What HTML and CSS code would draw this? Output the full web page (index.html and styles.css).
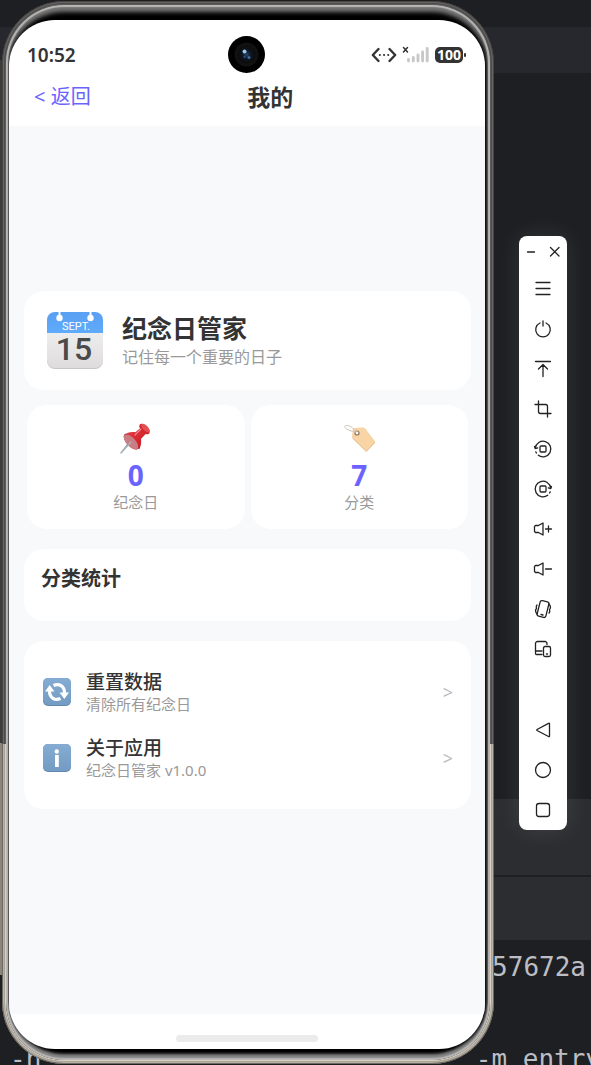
FILE: index.html
```
<!DOCTYPE html>
<html lang="zh-CN">

<head>
    <meta charset="UTF-8">
    <meta name="viewport" content="width=device-width, initial-scale=1">
    <title>我的</title>
    <link rel="stylesheet" href="styles.css">
</head>

<body>
    <div class="ide">
        <div class="ide-editor-top"></div>
        <div class="ide-tabs"></div>
        <div class="ide-editor"></div>
        <div class="ide-panel"></div>
        <div class="ide-panel-tabs"></div>
        <div class="ide-console">
            <div class="console-line"><span>57672a</span></div>
            <div class="console-line"></div>
            <div class="console-line console-command"><span>-h</span><span>-m entry</span></div>
        </div>
        <div class="side-rail"></div>
    </div>

    <div class="desktop">
        <div class="phone">
            <div class="bezel">
                <div class="screen">
                    <div class="status-bar">
                        <span class="time">10:52</span>
                        <svg class="camera" viewBox="0 0 37 37">
                            <defs>
                                <radialGradient id="lens">
                                    <stop offset="0" stop-color="#27466b" />
                                    <stop offset="0.5" stop-color="#10151f" />
                                    <stop offset="1" stop-color="#0b0b0b" />
                                </radialGradient>
                            </defs>
                            <circle cx="18.5" cy="18.5" r="18.5" fill="#000" />
                            <circle cx="18.5" cy="18.5" r="12" fill="#111" />
                            <circle cx="18.5" cy="18.5" r="9" fill="url(#lens)" />
                            <circle cx="16.5" cy="15.5" r="2" fill="#8fc6f2" />
                            <circle cx="21" cy="21.5" r="1.5" fill="#3c6ca6" />
                            <circle cx="16.5" cy="21" r="1" fill="#2e5587" />
                        </svg>
                        <div class="status-icons">
                            <svg width="26" height="18" viewBox="0 0 26 18" fill="none" stroke="#333" stroke-width="2.4" stroke-linecap="round" stroke-linejoin="round">
                                <path d="M7.5 3 1.8 9l5.7 6M18.500 3l5.700 6-5.700 6" />
                                <path d="M8.800 9h.1M13 9h.1M17.200 9h.1" stroke-width="2" />
                            </svg>
                            <svg width="28" height="18" viewBox="0 0 28 18" stroke-linecap="round">
                                <path d="M1.500 1.500l4 4.500M5.500 1.500l-4 4.500" stroke="#333" stroke-width="1.500" />
                                <path d="M6.500 15v-1.500M11.300 15v-3.500M16 15V9M20.600 15V6M25.200 15V2.500" stroke="#c8c8c8" stroke-width="2.900" />
                            </svg>
                            <span class="battery">100</span>
                        </div>
                    </div>

                    <div class="nav-bar">
                        <button class="back-button">&lt; 返回</button>
                        <h1 class="nav-title">我的</h1>
                    </div>

                    <main class="content">
                        <section class="card profile">
                            <svg class="profile-icon" viewBox="0 0 56 57">
                                <defs>
                                    <linearGradient id="paper" x2="0" y2="1">
                                        <stop offset="0" stop-color="#f8f8f8" />
                                        <stop offset="1" stop-color="#dedcdd" />
                                    </linearGradient>
                                    <linearGradient id="sky" x2="0" y2="1">
                                        <stop offset="0" stop-color="#5a9ff2" />
                                        <stop offset="1" stop-color="#5fabfc" />
                                    </linearGradient>
                                </defs>
                                <rect y="1" width="56" height="56" rx="8" fill="#cac6c6" />
                                <rect width="56" height="56" rx="8" fill="url(#paper)" />
                                <path d="M0 21V8a8 8 0 0 1 8-8h40a8 8 0 0 1 8 8v13z" fill="url(#sky)" />
                                <path d="M12.500 0v5M43.500 0v5" stroke="#fff" stroke-width="2" />
                                <circle cx="12.500" cy="6" r="3.200" fill="#fff" />
                                <circle cx="43.500" cy="6" r="3.200" fill="#fff" />
                                <text class="calendar-month" x="29" y="18">SEPT.</text>
                                <text class="calendar-day" x="27" y="48">15</text>
                            </svg>
                            <div>
                                <h2 class="profile-name">纪念日管家</h2>
                                <p class="profile-slogan">记住每一个重要的日子</p>
                            </div>
                        </section>

                        <section class="stats">
                            <div class="card stat">
                                <svg class="stat-icon" viewBox="0 0 31 31">
                                    <defs>
                                        <linearGradient id="pin" x2="1" y2="1">
                                            <stop offset="0" stop-color="#e5404b" />
                                            <stop offset="0.6" stop-color="#d5262f" />
                                            <stop offset="1" stop-color="#a91c28" />
                                        </linearGradient>
                                    </defs>
                                    <path d="M10.500 20 2 29.500l-1.500 1L1 29l8-10.500z" fill="#8b98a2" />
                                    <ellipse cx="11.500" cy="18.500" rx="5" ry="10" transform="rotate(-44 11.500 18.500)" fill="#b61d2a" />
                                    <path d="M7 10c3-1 6-1.200 8.500-.8l6-5.200 5.500 5.500-6 6.500c.5 3 0 6.500-1.500 10C14 25 7 17 7 10z" fill="url(#pin)" />
                                    <ellipse cx="11" cy="19" rx="4.500" ry="9.500" transform="rotate(-43 11 19)" fill="#ca7d82" />
                                    <ellipse cx="24.500" cy="6" rx="3.500" ry="6.500" transform="rotate(-44 24.500 6)" fill="#cf2833" />
                                    <ellipse cx="25.500" cy="5" rx="2.500" ry="5.500" transform="rotate(-44 25.500 5)" fill="#e74d55" />
                                    <path d="M15 12l6-6" stroke="#f4848a" stroke-width="1.200" stroke-linecap="round" />
                                    <path d="M1 30l10-11" stroke="#a9b4bb" stroke-width="1.300" stroke-linecap="round" />
                                </svg>
                                <strong class="stat-value">0</strong>
                                <span class="stat-label">纪念日</span>
                            </div>
                            <div class="card stat">
                                <svg class="stat-icon" viewBox="0 0 31 31">
                                    <path d="M9.500 5.500 19 4.800a3 3 0 0 1 2 .8L31.500 19.500 22.300 29 9 16a3 3 0 0 1-.8-2z" fill="#e3bd8e" />
                                    <path d="M10 5l8.500-.5a3 3 0 0 1 2 .7L31 18.800 22.300 28 9.300 15a3 3 0 0 1-.8-2L8.600 7A2 2 0 0 1 10 5z" fill="#f9d5a5" />
                                    <circle cx="13" cy="10" r="2" fill="#fff" stroke="#8d7562" stroke-width="1.200" />
                                    <path d="M12.500 9C8 9 1 6 .6 3.700.2 1.500 6 2.300 8.500 5L12 8.500" fill="none" stroke="#cdc5bd" stroke-width="1" />
                                </svg>
                                <strong class="stat-value">7</strong>
                                <span class="stat-label">分类</span>
                            </div>
                        </section>

                        <section class="card category">
                            <h2 class="category-title">分类统计</h2>
                        </section>

                        <section class="card menu">
                            <button class="menu-item">
                                <svg class="menu-icon" viewBox="0 0 28 28">
                                    <defs>
                                        <linearGradient id="tile" x2="0" y2="1">
                                            <stop offset="0" stop-color="#85add3" />
                                            <stop offset="1" stop-color="#739bc3" />
                                        </linearGradient>
                                    </defs>
                                    <rect width="28" height="28" rx="5" fill="#6288ad" />
                                    <rect width="28" height="27" rx="5" fill="url(#tile)" />
                                    <g fill="none" stroke="#fff" stroke-width="3.200">
                                        <path d="M10.500 7.500C16 5 21.500 8 21.500 15" />
                                        <path d="M17.500 20.500C12 23 6.500 20 6.500 13" />
                                    </g>
                                    <path d="M16.500 14.500h9.500L21.300 21zM2 13.500h9.500L6.700 7z" fill="#fff" />
                                </svg>
                                <span class="menu-text">
                                    <span class="menu-title">重置数据</span>
                                    <span class="menu-desc">清除所有纪念日</span>
                                </span>
                                <span class="menu-arrow">&gt;</span>
                            </button>
                            <button class="menu-item">
                                <svg class="menu-icon" viewBox="0 0 28 28">
                                    <rect width="28" height="28" rx="5" fill="#6288ad" />
                                    <rect width="28" height="27" rx="5" fill="url(#tile)" />
                                    <circle cx="13.800" cy="7.500" r="2.200" fill="#fff" />
                                    <path d="M12 11h3.800v12H12z" fill="#fff" />
                                </svg>
                                <span class="menu-text">
                                    <span class="menu-title">关于应用</span>
                                    <span class="menu-desc">纪念日管家 v1.0.0</span>
                                </span>
                                <span class="menu-arrow">&gt;</span>
                            </button>
                        </section>
                    </main>

                    <div class="home-bar">
                        <div class="home-handle"></div>
                    </div>
                </div>
            </div>
        </div>

        <div class="toolbar">
            <div class="toolbar-head">
                <button class="window-button" aria-label="最小化">
                    <svg width="12" height="12" viewBox="0 0 12 12"><path d="M2.500 6h7" /></svg>
                </button>
                <button class="window-button" aria-label="关闭">
                    <svg width="12" height="12" viewBox="0 0 12 12"><path d="M1.500 1.500l8.500 8.500M10 1.500l-8.500 8.500" /></svg>
                </button>
            </div>
            <button class="tool" aria-label="菜单">
                <svg viewBox="0 0 20 20"><path d="M3 3.500h14M3 9.500h14M3 15.500h14" /></svg>
            </button>
            <button class="tool" aria-label="电源">
                <svg viewBox="0 0 20 20"><path d="M7 4a7.300 7.300 0 1 0 6 0M10 2v5" /></svg>
            </button>
            <button class="tool" aria-label="置顶">
                <svg viewBox="0 0 20 20"><path d="M2.500 2.500h15M10 17.500V5.500M5.500 10 10 5.500l4.500 4.500" /></svg>
            </button>
            <button class="tool" aria-label="截图">
                <svg viewBox="0 0 20 20"><path d="M5.500 2v10.500a2 2 0 0 0 2 2H18M2 5.500h10.500a2 2 0 0 1 2 2V18" /></svg>
            </button>
            <button class="tool" aria-label="向左旋转">
                <svg viewBox="0 0 20 20"><path d="M2.300 9a7.800 7.800 0 1 1 3 7.200M3.400 14a7.800 7.800 0 0 1-.6-1.200" /><path d="M1.500 7.500l.8 2 2.400-.6" /><rect x="7" y="7" width="6" height="6" rx="1" /></svg>
            </button>
            <button class="tool" aria-label="向右旋转">
                <svg viewBox="0 0 20 20"><path d="M17.700 9a7.800 7.800 0 1 0-3 7.200M16.600 14a7.800 7.800 0 0 0 .6-1.200" /><path d="M18.500 7.500l-.8 2-2.400-.6" /><rect x="7" y="7" width="6" height="6" rx="1" /></svg>
            </button>
            <button class="tool" aria-label="音量加">
                <svg viewBox="0 0 20 20"><path d="M1.500 12.500v-5l1-1h3L10 4v12l-4.500-2.500h-3zM12.500 10h6M15.500 7v6" /></svg>
            </button>
            <button class="tool" aria-label="音量减">
                <svg viewBox="0 0 20 20"><path d="M1.500 12.500v-5l1-1h3L10 4v12l-4.500-2.500h-3zM12.500 10h6" /></svg>
            </button>
            <button class="tool" aria-label="摇一摇">
                <svg viewBox="0 0 20 20"><rect x="5.500" y="2" width="9" height="16" rx="2" transform="rotate(14 10 10)" /><path d="M8 15.500l2 .5M4 6c-1 1-1 2-.5 3.500-1.500 1.500-1.500 3 .5 5.500M16 14c1-1 1-2 .5-3.500 1.500-1.500 1.500-3-.5-5.500" /></svg>
            </button>
            <button class="tool" aria-label="多设备">
                <svg viewBox="0 0 20 20"><path d="M14 5.500V4.500a2 2 0 0 0-2-2H4.500a2 2 0 0 0-2 2V14M2.500 12H9M2.500 14.500a1 1 0 0 0 1 1H9" /><rect x="10.500" y="7.500" width="7" height="10" rx="1.500" /><path d="M13.500 15h1" /></svg>
            </button>
            <div class="tool-gap"></div>
            <button class="tool" aria-label="返回键">
                <svg viewBox="0 0 20 20"><path d="M16.500 4v12a.6.6 0 0 1-1 .5L4 10.500a.6.6 0 0 1 0-1L15.500 3.400a.6.6 0 0 1 1 .6z" /></svg>
            </button>
            <button class="tool" aria-label="主页键">
                <svg viewBox="0 0 20 20"><circle cx="10" cy="10" r="7.500" /></svg>
            </button>
            <button class="tool" aria-label="最近任务">
                <svg viewBox="0 0 20 20"><rect x="3.500" y="3.500" width="13" height="13" rx="2.500" /></svg>
            </button>
        </div>
    </div>
</body>

</html>
```

FILE: styles.css
```
* {
    box-sizing: border-box;
}

body {
    margin: 0;
    min-height: 100vh;
    position: relative;
    overflow: hidden;
    background: #1e1f22;
    font-family: "Noto Sans", "Noto Sans CJK SC", sans-serif;
    color: #333;
}

h1,
h2,
p {
    margin: 0;
}

button {
    border: none;
    padding: 0;
    background: none;
    font-family: inherit;
    color: inherit;
    cursor: pointer;
}

svg {
    display: block;
    flex-shrink: 0;
}

/* IDE behind the emulator */
.ide {
    position: absolute;
    inset: 0;
    display: flex;
    flex-direction: column;
    overflow: hidden;
}

.ide-editor-top {
    height: 27px;
}

.ide-tabs {
    height: 46px;
    background: #27282e;
}

.ide-editor {
    flex: 1;
}

.ide-panel {
    height: 78px;
    background: #2b2d30;
    border-bottom: 2px solid #1e1f22;
}

.ide-panel-tabs {
    height: 63px;
    background: #2b2d30;
}

.ide-console {
    height: 125px;
    padding-top: 4px;
    font: 26px/46px "DejaVu Sans Mono", monospace;
    color: #bcbec4;
}

.console-line {
    display: flex;
    justify-content: flex-end;
    height: 46px;
    padding-right: 5px;
    white-space: pre;
}

.console-command {
    justify-content: space-between;
    padding: 0 0 0 10px;
    margin-right: -10px;
}

.side-rail {
    position: absolute;
    left: 0;
    top: 60px;
    bottom: 90px;
    width: 4px;
    background: linear-gradient(#3c3c3d 0 683px, #8c857b 683px);
}

/* phone */
.desktop {
    position: relative;
    min-height: 100vh;
    display: flex;
    align-items: center;
    gap: 25px;
    padding: 1px 24px 1px 2px;
}

.phone {
    flex: 1;
    align-self: stretch;
    display: flex;
    padding: 4px;
    border-radius: 62px;
    background: linear-gradient(#5c5c5d 0 743px, #d9d0c2 743px);
    box-shadow: inset 0 0 0 1px rgba(40, 36, 30, 0.5), inset 0 0 0 2px rgba(255, 255, 255, 0.15), inset 0 0 0 3px rgba(30, 28, 24, 0.25);
}

.bezel {
    flex: 1;
    display: flex;
    padding: 15px 5px 11px 3px;
    border-radius: 58px;
    background: #000;
    box-shadow: inset 0 0 1px 2px #b9b7b6, inset 0 5px 4px 2px #777, inset 0 -4px 3px 2px #888;
}

.screen {
    flex: 1;
    display: flex;
    flex-direction: column;
    overflow: hidden;
    border-radius: 46px;
    background: #fff;
}

.status-bar {
    display: grid;
    grid-template-columns: 1fr auto 1fr;
    align-items: center;
    padding: 16px 22px 0 18px;
}

.time {
    font-size: 19px;
    line-height: 24px;
    font-weight: 600;
}

.camera {
    width: 37px;
    height: 37px;
    margin-left: 3px;
}

.status-icons {
    display: flex;
    justify-content: flex-end;
    align-items: center;
    gap: 5px;
}

.battery {
    position: relative;
    padding: 0 2px;
    border-radius: 5px;
    background: #333;
    color: #fff;
    font-size: 14px;
    line-height: 16px;
    font-weight: 700;
}

.battery::after {
    content: "";
    position: absolute;
    left: 100%;
    top: 6px;
    width: 2px;
    height: 4px;
    margin-left: 1px;
    border-radius: 1px;
    background: #333;
}

.nav-bar {
    display: flex;
    align-items: center;
    height: 53px;
    padding: 0 35px 6px 25px;
}

.back-button {
    font-size: 20px;
    line-height: 28px;
    color: #6c63ff;
}

.nav-title {
    flex: 1;
    text-align: center;
    font-size: 23px;
    line-height: 32px;
    font-weight: 700;
}

.content {
    flex: 1;
    display: flex;
    flex-direction: column;
    justify-content: center;
    gap: 20px;
    padding: 0 14px 40px 15px;
    background: #f8f9fb;
}

.card {
    border-radius: 20px;
    background: #fff;
}

.profile {
    display: flex;
    align-items: center;
    gap: 19px;
    padding: 21px 23px;
}

.profile-icon {
    width: 56px;
    height: 57px;
}

.calendar-month {
    font-family: Roboto, sans-serif;
    font-size: 11px;
    fill: #fff;
    text-anchor: middle;
}

.calendar-day {
    font-family: Roboto, sans-serif;
    font-size: 32px;
    font-weight: 500;
    fill: #4a4a4a;
    text-anchor: middle;
}

.profile-name {
    font-size: 25px;
    line-height: 33px;
    font-weight: 700;
}

.profile-slogan {
    font-size: 16px;
    line-height: 24px;
    color: #999;
}

.stats {
    display: flex;
    gap: 6px;
    margin-top: -5px;
    padding: 0 3px;
}

.stat {
    flex: 1;
    display: flex;
    flex-direction: column;
    align-items: center;
    padding: 18px 0 17px;
}

.stat-icon {
    width: 31px;
    height: 31px;
    margin-bottom: 4px;
}

.stat-value {
    font-size: 28px;
    line-height: 34px;
    color: #6c63ff;
}

.stat-label {
    font-size: 15px;
    line-height: 20px;
    color: #999;
}

.category {
    padding: 17px 17px 29px;
}

.category-title {
    font-size: 20px;
    line-height: 26px;
    font-weight: 700;
}

.menu {
    display: flex;
    flex-direction: column;
    padding: 18px 18px 18px 19px;
}

.menu-item {
    display: flex;
    align-items: center;
    gap: 15px;
    height: 66px;
    text-align: left;
}

.menu-icon {
    width: 28px;
    height: 28px;
}

.menu-text {
    flex: 1;
    display: flex;
    flex-direction: column;
}

.menu-title {
    font-size: 19px;
    line-height: 24px;
    font-weight: 500;
}

.menu-desc {
    font-size: 15px;
    line-height: 20px;
    color: #999;
}

.menu-arrow {
    font-size: 18px;
    line-height: 24px;
    color: #bbb;
}

.home-bar {
    display: flex;
    justify-content: center;
    align-items: center;
    height: 35px;
    padding-top: 14px;
}

.home-handle {
    width: 30%;
    height: 7px;
    border-radius: 4px;
    background: #ebebeb;
}

/* emulator toolbar */
.toolbar {
    display: flex;
    flex-direction: column;
    width: 48px;
    border-radius: 8px;
    background: #fff;
    box-shadow: 0 0 24px rgba(255, 255, 255, 0.1);
}

.toolbar-head {
    display: flex;
    justify-content: space-between;
    height: 33px;
    padding: 0 6px;
}

.window-button,
.tool {
    display: flex;
    justify-content: center;
    align-items: center;
}

.tool {
    height: 40px;
}

.tool svg {
    width: 20px;
    height: 20px;
}

.toolbar svg {
    fill: none;
    stroke: #222;
    stroke-width: 1.3;
    stroke-linecap: round;
    stroke-linejoin: round;
}

.tool-gap {
    height: 41px;
}
```
